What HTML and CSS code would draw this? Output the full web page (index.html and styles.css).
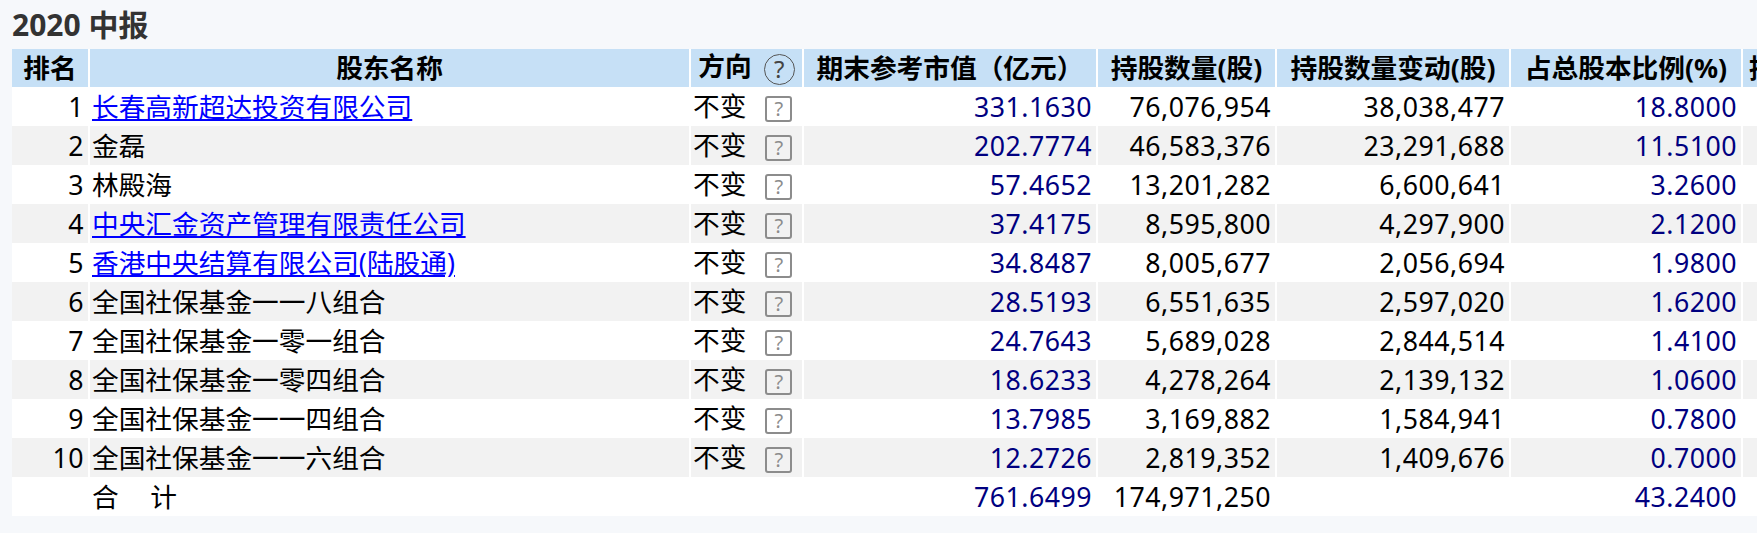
FILE: index.html
```html
<!DOCTYPE html>
<html lang="zh-CN">
<head>
<meta charset="utf-8">
<title>2020 中报 十大股东</title>
<link rel="stylesheet" href="styles.css">
</head>
<body>
<div class="page">
  <h2 class="title">2020 中报</h2>
  <table class="holders">
    <thead>
      <tr>
        <th class="c-rank">排名</th>
        <th class="c-name">股东名称</th>
        <th class="c-dir">方向<span class="help-circle">?</span></th>
        <th class="c-value">期末参考市值（亿元）</th>
        <th class="c-shares">持股数量(股)</th>
        <th class="c-change">持股数量变动(股)</th>
        <th class="c-ratio">占总股本比例(%)</th>
        <th class="c-extra">持股比例变动</th>
      </tr>
    </thead>
    <tbody>
      <tr><td class="num">1</td><td class="name"><a href="#">长春高新超达投资有限公司</a></td><td class="dir">不变<span class="help-box">?</span></td><td class="num navy">331.1630</td><td class="num">76,076,954</td><td class="num">38,038,477</td><td class="num navy">18.8000</td><td></td></tr>
      <tr><td class="num">2</td><td class="name">金磊</td><td class="dir">不变<span class="help-box">?</span></td><td class="num navy">202.7774</td><td class="num">46,583,376</td><td class="num">23,291,688</td><td class="num navy">11.5100</td><td></td></tr>
      <tr><td class="num">3</td><td class="name">林殿海</td><td class="dir">不变<span class="help-box">?</span></td><td class="num navy">57.4652</td><td class="num">13,201,282</td><td class="num">6,600,641</td><td class="num navy">3.2600</td><td></td></tr>
      <tr><td class="num">4</td><td class="name"><a href="#">中央汇金资产管理有限责任公司</a></td><td class="dir">不变<span class="help-box">?</span></td><td class="num navy">37.4175</td><td class="num">8,595,800</td><td class="num">4,297,900</td><td class="num navy">2.1200</td><td></td></tr>
      <tr><td class="num">5</td><td class="name"><a href="#">香港中央结算有限公司(陆股通)</a></td><td class="dir">不变<span class="help-box">?</span></td><td class="num navy">34.8487</td><td class="num">8,005,677</td><td class="num">2,056,694</td><td class="num navy">1.9800</td><td></td></tr>
      <tr><td class="num">6</td><td class="name">全国社保基金一一八组合</td><td class="dir">不变<span class="help-box">?</span></td><td class="num navy">28.5193</td><td class="num">6,551,635</td><td class="num">2,597,020</td><td class="num navy">1.6200</td><td></td></tr>
      <tr><td class="num">7</td><td class="name">全国社保基金一零一组合</td><td class="dir">不变<span class="help-box">?</span></td><td class="num navy">24.7643</td><td class="num">5,689,028</td><td class="num">2,844,514</td><td class="num navy">1.4100</td><td></td></tr>
      <tr><td class="num">8</td><td class="name">全国社保基金一零四组合</td><td class="dir">不变<span class="help-box">?</span></td><td class="num navy">18.6233</td><td class="num">4,278,264</td><td class="num">2,139,132</td><td class="num navy">1.0600</td><td></td></tr>
      <tr><td class="num">9</td><td class="name">全国社保基金一一四组合</td><td class="dir">不变<span class="help-box">?</span></td><td class="num navy">13.7985</td><td class="num">3,169,882</td><td class="num">1,584,941</td><td class="num navy">0.7800</td><td></td></tr>
      <tr><td class="num">10</td><td class="name">全国社保基金一一六组合</td><td class="dir">不变<span class="help-box">?</span></td><td class="num navy">12.2726</td><td class="num">2,819,352</td><td class="num">1,409,676</td><td class="num navy">0.7000</td><td></td></tr>
      <tr class="total"><td></td><td class="name">合　计</td><td></td><td class="num navy">761.6499</td><td class="num">174,971,250</td><td></td><td class="num navy">43.2400</td><td></td></tr>
    </tbody>
  </table>
</div>
</body>
</html>
```

FILE: styles.css
```css
html, body {
  margin: 0;
  padding: 0;
  overflow: hidden;
  background: #f6f8fb;
}

.page {
  padding: 0 0 0 12px;
  font-family: "Noto Sans", "Noto Sans CJK SC", sans-serif;
  font-size: 26.7px;
  color: #000;
}

.title {
  margin: 0;
  height: 49px;
  line-height: 50px;
  font-size: 30px;
  font-weight: bold;
  color: #333;
}

.holders {
  border-collapse: separate;
  border-spacing: 0;
  table-layout: fixed;
  width: 1903px;
}

.holders th,
.holders td {
  box-sizing: border-box;
  padding: 0 4px;
  border-left: 2px solid #fff;
  white-space: nowrap;
  line-height: 30px;
  vertical-align: middle;
}

.holders th:first-child,
.holders td:first-child {
  border-left: none;
}

.holders th {
  height: 38px;
  background: #c6e0f6;
  font-weight: bold;
  text-align: center;
  color: #000;
}

.holders td {
  height: 39px;
  background: #fff;
}

.holders tbody tr:nth-child(even) td {
  background: #f2f2f2;
}

.c-rank { width: 76px; }
.c-name { width: 601px; }
.c-dir { width: 113px; }
.c-value { width: 294px; }
.c-shares { width: 179px; }
.c-change { width: 234px; }
.c-ratio { width: 232px; }
.c-extra { width: 174px; }

.holders td.num {
  text-align: right;
  letter-spacing: 0.5px;
}

.holders td.name,
.holders td.dir {
  text-align: left;
  padding-left: 2px;
}

.holders td.navy {
  color: #000080;
}

.holders a {
  color: #0000ff;
  text-decoration: underline;
}

.total .name {
  letter-spacing: 2.5px;
}

.help-circle {
  display: inline-block;
  box-sizing: border-box;
  width: 31px;
  height: 31px;
  margin-left: 12px;
  border: 1.5px solid #555;
  border-radius: 50%;
  font-size: 24px;
  font-weight: normal;
  line-height: 27px;
  text-align: center;
  color: #444;
  vertical-align: middle;
}

.help-box {
  display: inline-block;
  box-sizing: border-box;
  width: 27px;
  height: 26px;
  margin-left: 19px;
  border: 2px solid #8c8c8c;
  border-radius: 3px;
  font-size: 20px;
  line-height: 21px;
  text-align: center;
  color: #8c8c8c;
  vertical-align: middle;
}
```
